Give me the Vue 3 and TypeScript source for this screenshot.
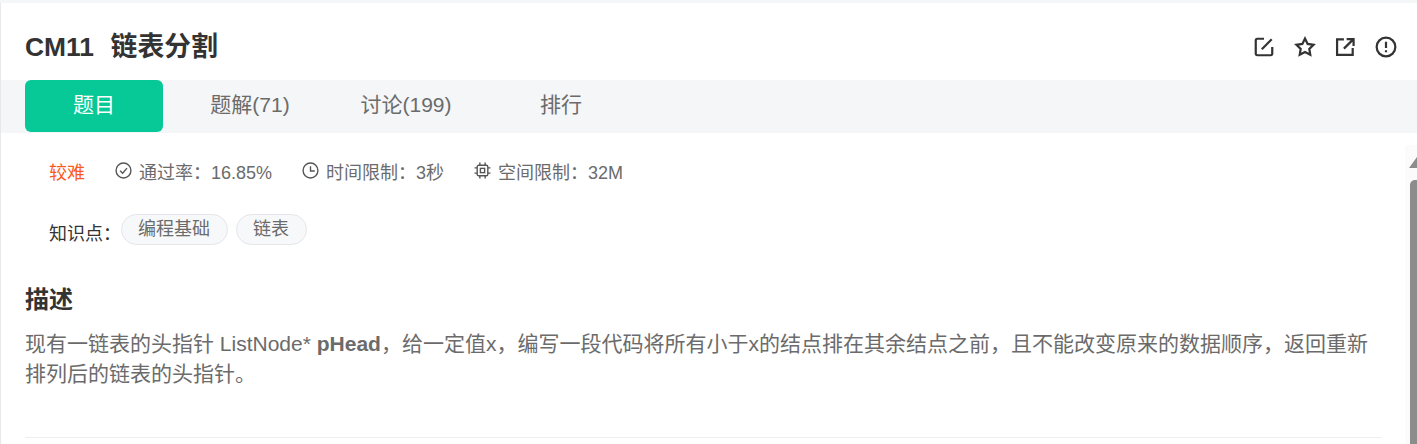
<template>
  <div class="page">
    <div class="card">
      <header class="head">
        <h1 class="title">CM11&nbsp;&nbsp;<span class="title-cn">链表分割</span></h1>
        <div class="actions">
          <svg viewBox="0 0 20 20" class="act">
            <path d="M10 2.500H4A1.500 1.500 0 0 0 2.500 4V16A1.500 1.500 0 0 0 4 17.500H16A1.500 1.500 0 0 0 17.500 16V10" />
            <path d="M17 3L8 12" />
          </svg>
          <svg viewBox="0 0 20 20" class="act tight">
            <path d="M10 2.300L12.400 7.200L17.800 8L13.900 11.800L14.800 17.100L10 14.600L5.200 17.100L6.100 11.800L2.200 8L7.600 7.200Z" />
          </svg>
          <svg viewBox="0 0 20 20" class="act">
            <path d="M9 3H2.800V17.200H17V11" />
            <path d="M9 11.500L17 3.500M11.500 2.800H17.800V9" />
          </svg>
          <svg viewBox="0 0 20 20" class="act">
            <circle cx="10" cy="10" r="8.500" />
            <path d="M10 5.200V11M10 13V14.800" />
          </svg>
        </div>
      </header>

      <nav class="tabs">
        <a v-for="t in tabs" :key="t.label" class="tab" :class="[t.cls, { active: t.active }]">{{ t.label }}</a>
      </nav>

      <section class="body">
        <div class="meta">
          <span class="level">较难</span>
          <span class="stat">
            <svg viewBox="0 0 16 16" class="ico">
              <circle cx="8" cy="8" r="7" />
              <path d="M4.800 8.300L7.200 10.500L11.300 5.800" />
            </svg>
            通过率：16.85%
          </span>
          <span class="stat">
            <svg viewBox="0 0 16 16" class="ico">
              <circle cx="8" cy="8" r="7" />
              <path d="M8 4V8.500H12" />
            </svg>
            时间限制：3秒
          </span>
          <span class="stat">
            <svg viewBox="0 0 16 16" class="ico">
              <rect x="3" y="3" width="10" height="10" rx="1.500" />
              <rect x="6" y="6" width="4" height="4" />
              <path d="M5.500 0.500V3M10.500 0.500V3M5.500 13V15.500M10.500 13V15.500M0.500 5.500H3M0.500 10.500H3M13 5.500H15.500M13 10.500H15.500" />
            </svg>
            空间限制：32M
          </span>
        </div>

        <div class="topics">
          <span class="topic-label">知识点：</span>
          <span v-for="k in topics" :key="k" class="chip">{{ k }}</span>
        </div>

        <h2 class="sub">描述</h2>
        <p class="desc">现有一链表的头指针 ListNode* <b>pHead</b>，给一定值x，编写一段代码将所有小于x的结点排在其余结点之前，且不能改变原来的数据顺序，返回重新排列后的链表的头指针。</p>
        <div class="rule"></div>
      </section>

      <div class="scroll">
        <i class="arrow"></i>
        <i class="thumb"></i>
      </div>
    </div>
  </div>
</template>

<script setup lang="ts">
const tabs = [
  { label: '题目', cls: 'w138', active: true },
  { label: '题解(71)', cls: 'w174' },
  { label: '讨论(199)', cls: 'w138' },
  { label: '排行', cls: 'w172' },
]

const topics = ['编程基础', '链表']
</script>

<style>
html,
body {
  margin: 0;
  overflow: hidden;
  background: #fff;
}
</style>

<style scoped>
.page {
  height: 444px;
  padding-top: 3px;
  box-sizing: border-box;
  background: #f5f6f8;
  font-family: "Liberation Sans", "Noto Sans CJK SC", sans-serif;
  overflow: hidden;
}

.card {
  position: relative;
  height: 441px;
  background: #fff;
  border-left: 1px solid #e8e8ea;
}

.head {
  display: flex;
  align-items: center;
  justify-content: space-between;
  height: 77px;
  box-sizing: border-box;
  padding: 10px 20px 0 24px;
}

.title {
  margin: 0;
  font-size: 26.400px;
  line-height: 34px;
  font-weight: 700;
  color: #333;
}

.title-cn {
  margin-left: 2px;
  font-size: 26.800px;
}

.actions {
  display: flex;
  gap: 19px;
}

.act {
  width: 22px;
  height: 22px;
  fill: none;
  stroke: #333;
  stroke-width: 2;
}

.act.tight {
  margin-right: -1px;
}

.tabs {
  display: flex;
  height: 53px;
  padding-left: 24px;
  background: #f5f6f8;
}

.tab {
  height: 52px;
  line-height: 50px;
  text-align: center;
  font-size: 21px;
  color: #6b6b6b;
  border-radius: 6px;
}

.w138 {
  width: 138px;
}

.w174 {
  width: 174px;
}

.w172 {
  width: 172px;
}

.tab.active {
  background: #06c997;
  color: #fff;
}

.body {
  padding: 0 36px 0 24px;
}

.meta {
  display: flex;
  align-items: center;
  height: 24px;
  margin-top: 26px;
  padding-left: 24px;
  font-size: 18px;
  color: #6b6b6b;
}

.level {
  margin-right: 30px;
  color: #fa5a1e;
}

.stat {
  display: flex;
  align-items: center;
  margin-right: 30px;
  gap: 7px;
}

.ico {
  width: 17px;
  height: 17px;
  margin-bottom: 2px;
  fill: none;
  stroke: #555;
  stroke-width: 1.300;
}

.topics {
  display: flex;
  align-items: center;
  height: 32px;
  margin-top: 30px;
  padding-left: 24px;
  font-size: 18px;
  color: #333;
}

.topic-label {
  padding-top: 6px;
}

.chip {
  height: 31px;
  line-height: 29px;
  box-sizing: border-box;
  margin-right: 8px;
  padding: 0 17px 0 16px;
  border: 1px solid #e5e6ea;
  border-radius: 16px;
  background: #f7f8fa;
  color: #6b6b6b;
}

.sub {
  margin: 39px 0 0;
  font-size: 24px;
  line-height: 32px;
  font-weight: 700;
  color: #333;
}

.desc {
  margin: 13px 0 0;
  font-size: 21px;
  line-height: 30px;
  color: #6b6b6b;
}

.rule {
  height: 1px;
  margin-top: 48px;
  background: #eeeef2;
}

.scroll {
  position: absolute;
  top: 142px;
  right: 0;
  bottom: 0;
  width: 12px;
  background: #fbfbfb;
}

.arrow {
  position: absolute;
  top: 12px;
  right: 0;
  border-left: 8px solid transparent;
  border-bottom: 11px solid #8c8c8c;
}

.thumb {
  position: absolute;
  top: 35px;
  right: 0;
  bottom: 0;
  width: 7px;
  background: #8c8c8c;
  border-top-left-radius: 5px;
}
</style>
